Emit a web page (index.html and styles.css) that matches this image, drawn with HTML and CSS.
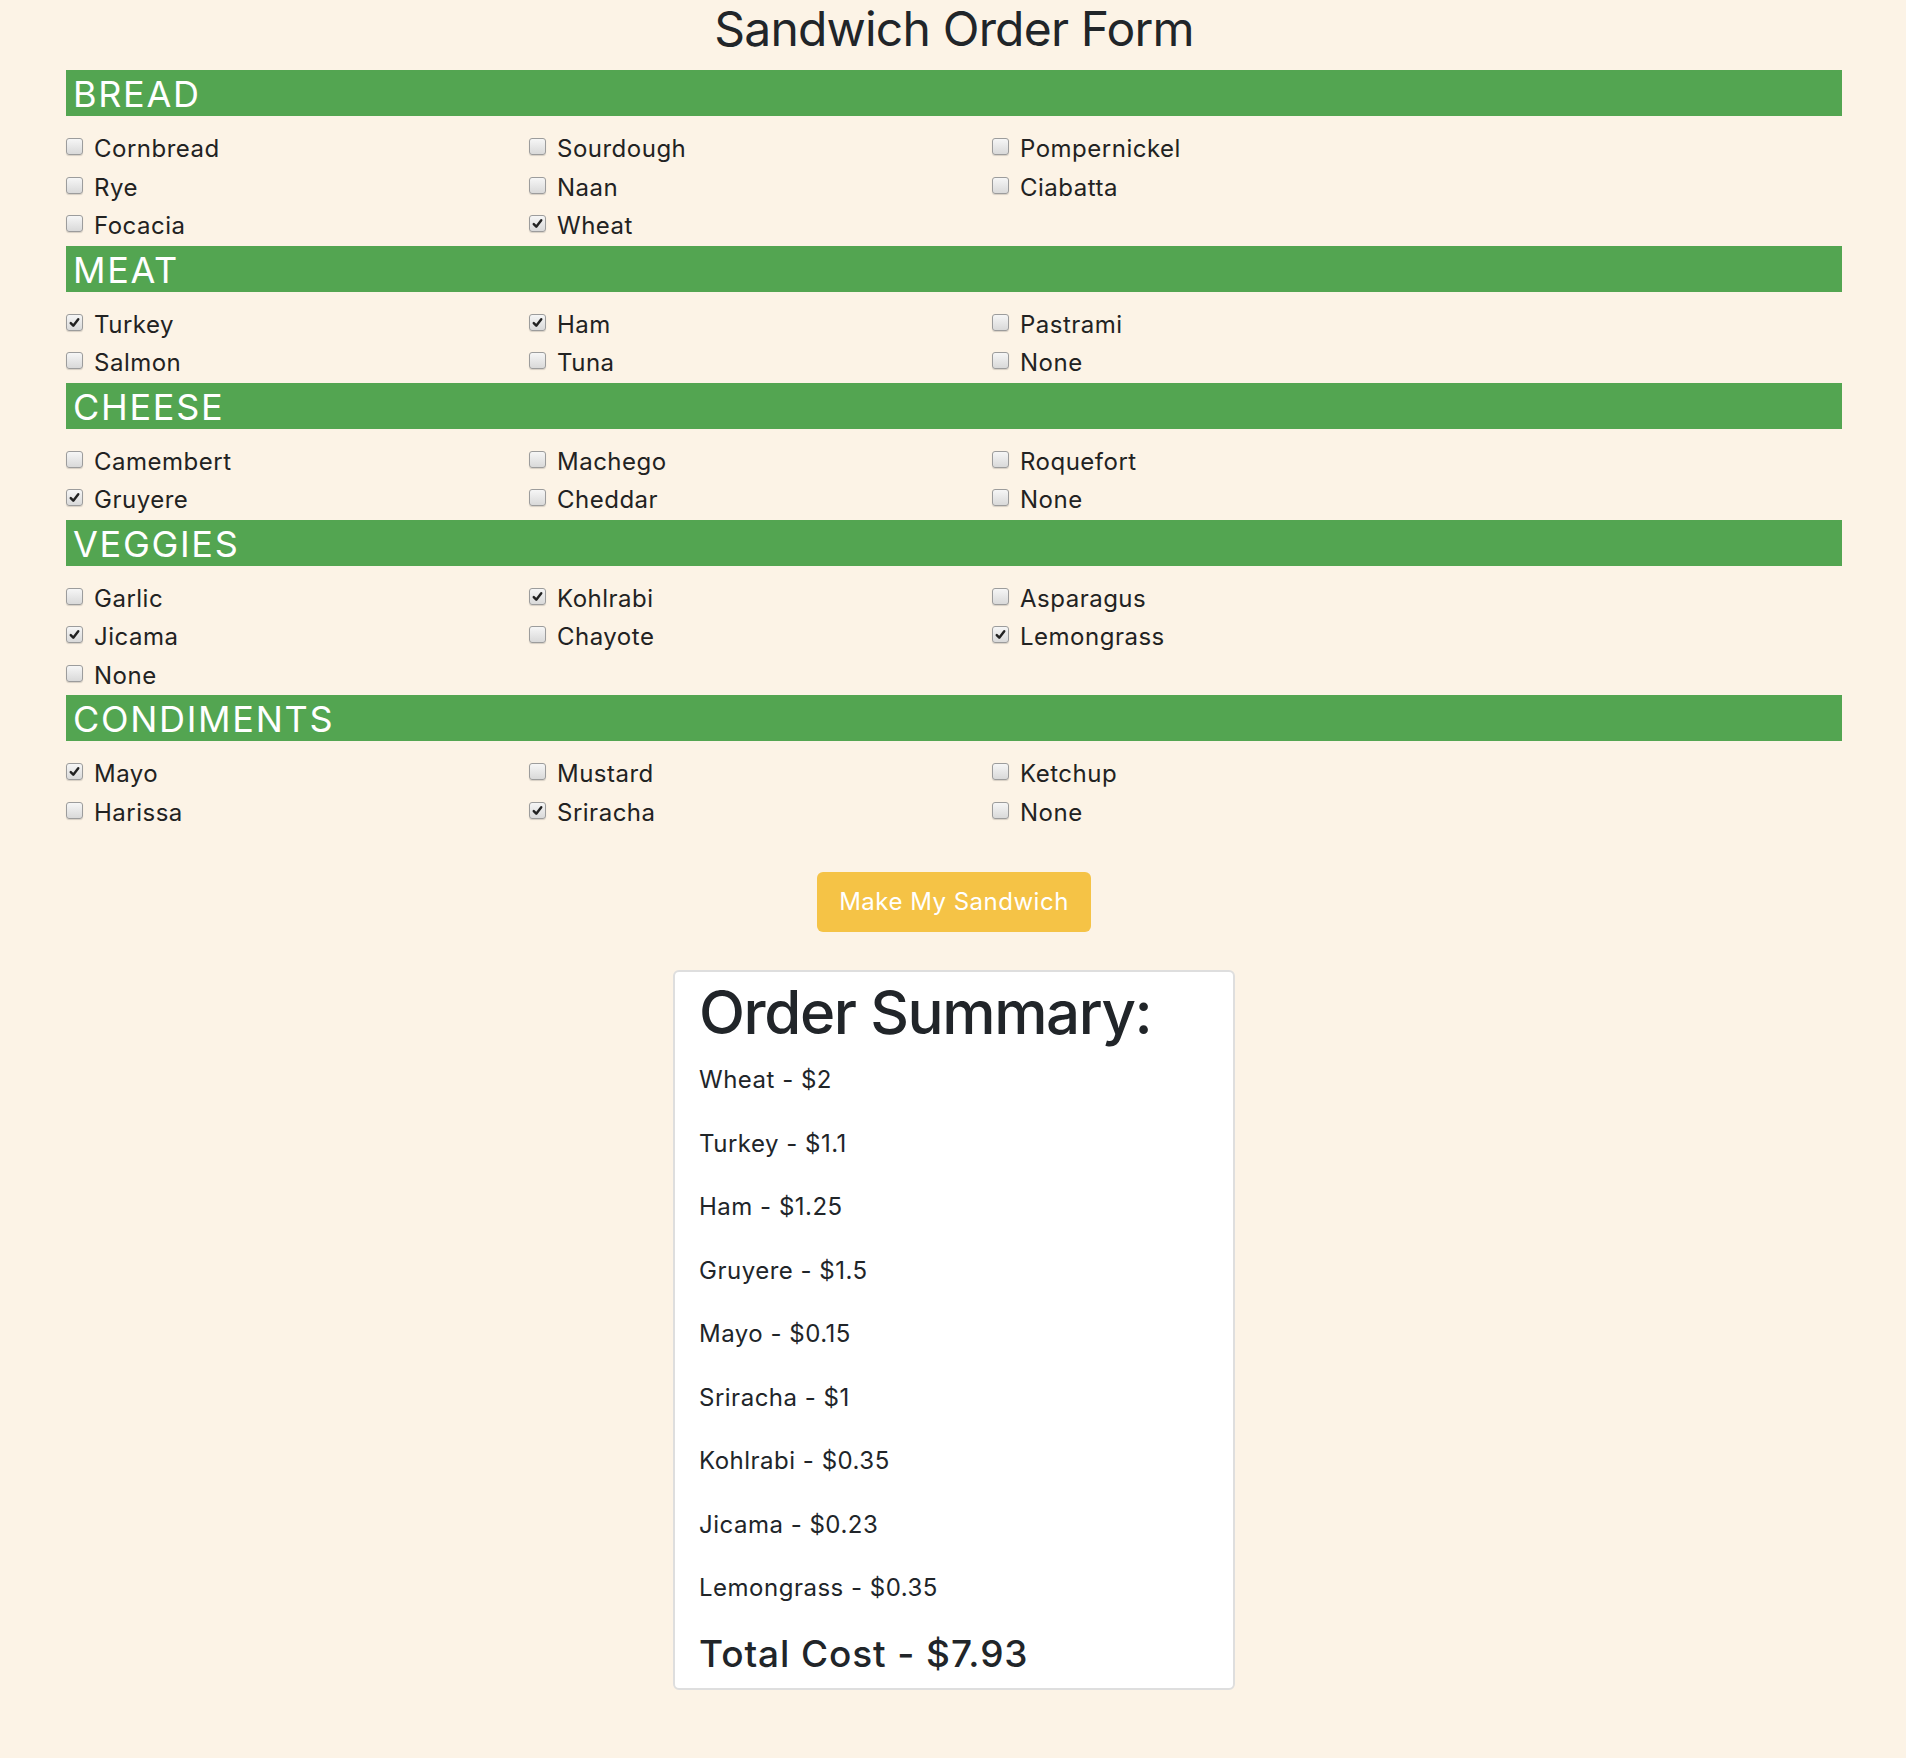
FILE: index.html
```html
<!DOCTYPE html>
<html lang="en">
<head>
<meta charset="utf-8">
<title>Sandwich Order Form</title>
<link rel="stylesheet" href="styles.css">
</head>
<body>
<div class="page">
  <h1 class="title">Sandwich Order Form</h1>

  <section class="group">
    <h2 class="group-head">BREAD</h2>
    <div class="options">
      <label class="opt"><span class="box"></span>Cornbread</label>
      <label class="opt"><span class="box"></span>Sourdough</label>
      <label class="opt"><span class="box"></span>Pompernickel</label>
      <label class="opt"><span class="box"></span>Rye</label>
      <label class="opt"><span class="box"></span>Naan</label>
      <label class="opt"><span class="box"></span>Ciabatta</label>
      <label class="opt"><span class="box"></span>Focacia</label>
      <label class="opt"><span class="box checked"><svg viewBox="0 0 16 16"><path d="M4 8.6 L6.7 11.4 L12 4.6"/></svg></span>Wheat</label>
    </div>
  </section>

  <section class="group">
    <h2 class="group-head">MEAT</h2>
    <div class="options">
      <label class="opt"><span class="box checked"><svg viewBox="0 0 16 16"><path d="M4 8.6 L6.7 11.4 L12 4.6"/></svg></span>Turkey</label>
      <label class="opt"><span class="box checked"><svg viewBox="0 0 16 16"><path d="M4 8.6 L6.7 11.4 L12 4.6"/></svg></span>Ham</label>
      <label class="opt"><span class="box"></span>Pastrami</label>
      <label class="opt"><span class="box"></span>Salmon</label>
      <label class="opt"><span class="box"></span>Tuna</label>
      <label class="opt"><span class="box"></span>None</label>
    </div>
  </section>

  <section class="group">
    <h2 class="group-head">CHEESE</h2>
    <div class="options">
      <label class="opt"><span class="box"></span>Camembert</label>
      <label class="opt"><span class="box"></span>Machego</label>
      <label class="opt"><span class="box"></span>Roquefort</label>
      <label class="opt"><span class="box checked"><svg viewBox="0 0 16 16"><path d="M4 8.6 L6.7 11.4 L12 4.6"/></svg></span>Gruyere</label>
      <label class="opt"><span class="box"></span>Cheddar</label>
      <label class="opt"><span class="box"></span>None</label>
    </div>
  </section>

  <section class="group">
    <h2 class="group-head">VEGGIES</h2>
    <div class="options">
      <label class="opt"><span class="box"></span>Garlic</label>
      <label class="opt"><span class="box checked"><svg viewBox="0 0 16 16"><path d="M4 8.6 L6.7 11.4 L12 4.6"/></svg></span>Kohlrabi</label>
      <label class="opt"><span class="box"></span>Asparagus</label>
      <label class="opt"><span class="box checked"><svg viewBox="0 0 16 16"><path d="M4 8.6 L6.7 11.4 L12 4.6"/></svg></span>Jicama</label>
      <label class="opt"><span class="box"></span>Chayote</label>
      <label class="opt"><span class="box checked"><svg viewBox="0 0 16 16"><path d="M4 8.6 L6.7 11.4 L12 4.6"/></svg></span>Lemongrass</label>
      <label class="opt"><span class="box"></span>None</label>
    </div>
  </section>

  <section class="group">
    <h2 class="group-head">CONDIMENTS</h2>
    <div class="options">
      <label class="opt"><span class="box checked"><svg viewBox="0 0 16 16"><path d="M4 8.6 L6.7 11.4 L12 4.6"/></svg></span>Mayo</label>
      <label class="opt"><span class="box"></span>Mustard</label>
      <label class="opt"><span class="box"></span>Ketchup</label>
      <label class="opt"><span class="box"></span>Harissa</label>
      <label class="opt"><span class="box checked"><svg viewBox="0 0 16 16"><path d="M4 8.6 L6.7 11.4 L12 4.6"/></svg></span>Sriracha</label>
      <label class="opt"><span class="box"></span>None</label>
    </div>
  </section>

  <div class="actions">
    <button class="make-btn" type="button">Make My Sandwich</button>
  </div>

  <div class="summary">
    <h1 class="summary-title">Order Summary:</h1>
    <p class="item">Wheat - $2</p>
    <p class="item">Turkey - $1.1</p>
    <p class="item">Ham - $1.25</p>
    <p class="item">Gruyere - $1.5</p>
    <p class="item">Mayo - $0.15</p>
    <p class="item">Sriracha - $1</p>
    <p class="item">Kohlrabi - $0.35</p>
    <p class="item">Jicama - $0.23</p>
    <p class="item">Lemongrass - $0.35</p>
    <h4 class="total">Total Cost - $7.93</h4>
  </div>
</div>
</body>
</html>
```
FILE: styles.css
```css
html, body {
  margin: 0;
  padding: 0;
}

body {
  background: #fcf3e6;
  color: #212529;
  font-family: Inter, "Noto Sans", "Liberation Sans", sans-serif;
  font-size: 24px;
  min-height: 1758px;
}

.page {
  width: 1776px;
  margin-left: 66px;
  padding-bottom: 60px;
}

.title {
  margin: 0 0 12px;
  font-size: 48px;
  font-weight: 400;
  line-height: 58px;
  text-align: center;
  letter-spacing: -0.8px;
}

.group-head {
  margin: 0;
  background: #53a551;
  color: #ffffff;
  font-size: 36px;
  font-weight: 400;
  line-height: 43px;
  padding: 3px 7px 0;
  letter-spacing: 1.7px;
}

.options {
  display: grid;
  grid-template-columns: repeat(3, 463px);
  margin-top: 14px;
}

.opt {
  display: flex;
  align-items: flex-start;
  height: 38.5px;
  line-height: 38.5px;
  font-size: 24px;
  letter-spacing: 0.5px;
  color: #222222;
}

.box {
  flex: none;
  width: 17px;
  height: 17px;
  margin: 8px 11px 0 0;
  box-sizing: border-box;
  border: 1px solid #9c9c9c;
  border-radius: 3px;
  background: linear-gradient(#f6f6f6, #d9d9d9);
  box-shadow: 0 1px 1px rgba(0, 0, 0, 0.15);
  display: flex;
  align-items: center;
  justify-content: center;
}

.box svg {
  width: 15px;
  height: 15px;
}

.box svg path {
  fill: none;
  stroke: #222222;
  stroke-width: 2.6;
  stroke-linecap: round;
  stroke-linejoin: round;
}

.actions {
  display: flex;
  justify-content: center;
  margin-top: 40px;
}

.make-btn {
  background: #f5c346;
  color: #ffffff;
  border: none;
  border-radius: 6px;
  font-family: inherit;
  font-size: 24px;
  line-height: 42px;
  letter-spacing: 0.5px;
  padding: 9px 22px;
  cursor: pointer;
}

.summary {
  width: 562px;
  box-sizing: border-box;
  margin: 38px auto 0;
  background: #ffffff;
  border: 2px solid #dedede;
  border-radius: 6px;
  padding: 4px 24px 0;
}

.summary-title {
  margin: 0 0 12px;
  font-size: 60px;
  font-weight: 500;
  line-height: 72px;
  letter-spacing: -1.4px;
}

.item {
  margin: 0 0 24px;
  font-size: 24px;
  line-height: 39.5px;
  letter-spacing: 0.5px;
}

.total {
  margin: 10px 0 13px;
  font-size: 37px;
  font-weight: 500;
  line-height: 43px;
  letter-spacing: 0.9px;
}
```
